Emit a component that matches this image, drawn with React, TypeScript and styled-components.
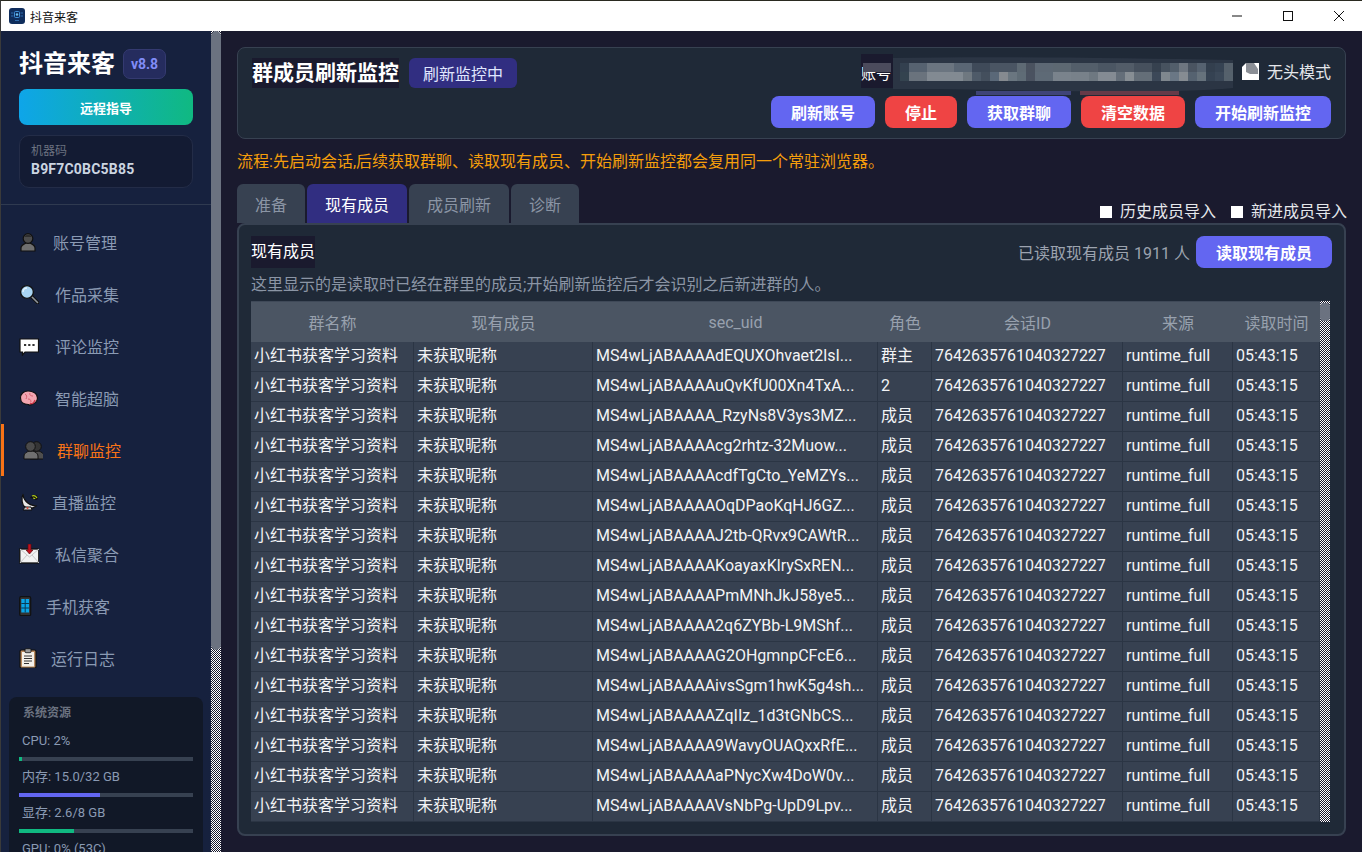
import React from "react";
import styled, { createGlobalStyle } from "styled-components";

const FONT = `Roboto, "Noto Sans CJK SC", sans-serif`;
const CHECKER = `conic-gradient(#ffffff 25%, #1a1a2e 0 50%, #ffffff 0 75%, #1a1a2e 0) 0 0 / 2px 2px`;

const Global = createGlobalStyle`
  html, body { margin: 0; padding: 0; background: #1a1a2e; overflow: hidden; }
  * { box-sizing: border-box; }
`;

const Win = styled.div`
  width: 1362px; height: 852px; display: flex; flex-direction: column; overflow: hidden;
  font-family: ${FONT}; font-size: 16px; background: #1a1a2e; color: #e5e7eb;
  border-left: 1px solid #3a3a3a; border-top: 1px solid #2a2a20;
`;
const TitleBar = styled.header`
  height: 30px; flex: none; background: #fff; color: #111; display: flex; align-items: center;
  padding-left: 8px; font-size: 12px; gap: 5px;
`;
const TitleText = styled.span`flex: 1;`;
const WinBtn = styled.div`
  width: 46px; height: 30px; display: flex; align-items: center; justify-content: center; color: #111;
`;
const Body = styled.div`flex: 1; display: flex; min-height: 0;`;
const Side = styled.aside`
  width: 210px; flex: none; background: #16213e; display: flex; flex-direction: column; overflow: hidden;
`;
const SideScroll = styled.div`
  width: 10px; flex: none; display: flex; flex-direction: column; background: ${CHECKER};
`;
const SideThumb = styled.div`
  height: 619px; background: #6b7280; border-radius: 5px 5px 5px 5px;
`;
const Brand = styled.div`
  padding: 18px 18px 0; display: flex; flex-direction: column;
`;
const BrandRow = styled.div`display: flex; align-items: center; gap: 8px; height: 30px;`;
const BrandName = styled.div`font-size: 24px; font-weight: 700; color: #fff; line-height: 30px;`;
const Version = styled.div`
  width: 43px; height: 30px; border-radius: 7px; background: #252c5e; border: 1px solid #343a70;
  color: #818cf8; font-size: 14px; font-weight: 700; display: flex; align-items: center; justify-content: center;
`;
const Remote = styled.button`
  margin-top: 10px; height: 36px; border: 0; border-radius: 8px; width: 174px; color: #fff;
  background: linear-gradient(90deg, #0ea5e9, #10b981); font: 700 13px ${FONT};
`;
const Machine = styled.div`
  margin-top: 10px; width: 174px; height: 53px; border-radius: 10px; background: #131b33;
  border: 1px solid #232c47; padding: 7px 11px; display: flex; flex-direction: column;
`;
const MachineLabel = styled.div`font-size: 12px; line-height: 16px; color: #6b7280;`;
const MachineCode = styled.div`font-size: 14px; font-weight: 700; line-height: 20px; color: #cbd5e1; letter-spacing: 0.2px;`;
const Rule = styled.div`height: 1px; margin-top: 16px; background: #2f3a50; flex: none;`;
const Nav = styled.nav`display: flex; flex-direction: column; padding-top: 11px; flex: none;`;
const NavItem = styled.div<{ $active?: boolean; $gap: number }>`
  height: 52px; display: flex; align-items: center; gap: ${(p) => p.$gap}px;
  padding-left: ${(p) => (p.$active ? 19 : 18)}px;
  border-left: ${(p) => (p.$active ? "3px solid #f97316" : "0")};
  color: ${(p) => (p.$active ? "#f97316" : "#8a9ab3")};
  font-size: 16px;
`;
const NavIcon = styled.svg`width: 20px; height: 20px; flex: none;`;
const Res = styled.section`
  margin: 13px 0 0 8px; width: 194px; flex: none; background: #111827; border-radius: 8px 8px 0 0;
  padding: 8px 10px 0; height: 180px;
`;
const ResTitle = styled.div`font-size: 12px; font-weight: 700; line-height: 16px; color: #6b7280; padding-left: 4px;`;
const ResLabel = styled.div`font-size: 13px; line-height: 20px; color: #8a9ab3; padding-left: 3px; margin-top: 6px;`;
const FirstLabel = styled(ResLabel)`margin-top: 10px;`;
const Track = styled.div`height: 4px; background: #374151; margin-top: 6px;`;
const Fill = styled.div<{ $color: string }>`height: 100%; background: ${(p) => p.$color};`;

const Main = styled.main`
  flex: 1; min-width: 0; padding: 16px 16px 0 16px; display: flex; flex-direction: column;
`;
const Head = styled.section`
  height: 92px; flex: none; background: #1f2937; border: 1px solid #374151; border-radius: 8px;
  display: flex; justify-content: space-between; padding: 6px 14px 0 14px;
`;
const HeadLeft = styled.div`display: flex; gap: 10px; margin-top: 4px; height: 30px;`;
const PageTitle = styled.h1`
  margin: 0; font-size: 21px; font-weight: 700; color: #fff; background: #1a1a2e; line-height: 30px; height: 30px;
`;
const Status = styled.div`
  width: 108px; height: 30px; border-radius: 6px; background: #312e81; color: #e0e7ff;
  font-size: 16px; display: flex; align-items: center; justify-content: center;
`;
const HeadRight = styled.div`display: flex; flex-direction: column; align-items: flex-end; gap: 8px;`;
const AccountRow = styled.div`height: 34px; display: flex; align-items: center;`;
const AccountLabel = styled.div`
  width: 32px; height: 34px; background: #1a1a2e; color: #fff; font-size: 15px; line-height: 40px; overflow: hidden;
`;
const Mosaic = styled.svg`
  width: 386px; height: 42px; margin-left: -37px; overflow: visible; flex: none; margin-top: 8px;
`;
const Headless = styled.svg`width: 17px; height: 17px; margin-right: 8px; flex: none;`;
const HeadlessText = styled.span`color: #e5e7eb; font-size: 16px;`;
const Buttons = styled.div`display: flex; gap: 10px;`;
const Btn = styled.button<{ $tone: "primary" | "danger" }>`
  height: 32px; padding: 0 20px; border: 0; border-radius: 8px; color: #fff; white-space: nowrap;
  background: ${(p) => (p.$tone === "primary" ? "#6366f1" : "#ef4444")};
  font: 700 16px ${FONT};
`;
const Flow = styled.p`
  margin: 12px 0 0; font-size: 16px; line-height: 22px; color: #f59e0b; height: 22px; flex: none;
`;
const TabRow = styled.div`
  margin-top: 11px; height: 39px; flex: none; display: flex; align-items: stretch; gap: 2px; position: relative; z-index: 1;
`;
const Tab = styled.div<{ $active?: boolean }>`
  padding: 0 18px; border-radius: 6px 6px 0 0; display: flex; align-items: center; font-size: 16px;
  background: ${(p) => (p.$active ? "#312e81" : "#374151")};
  color: ${(p) => (p.$active ? "#fff" : "#8b95a5")};
`;
const Checks = styled.div`
  margin-left: auto; display: flex; align-items: center; gap: 15px; padding: 17px 0 0 0; margin-right: -1px;
`;
const Check = styled.label`display: flex; align-items: center; gap: 8px; color: #e5e7eb; font-size: 16px; line-height: 22px;`;
const Box = styled.span`width: 12px; height: 12px; background: #fff; display: block;`;

const Panel = styled.section`
  height: 613px; flex: none; background: #1f2937; border: 2px solid #374151; border-radius: 8px;
  padding: 11px 12px 12px; display: flex; flex-direction: column;
`;
const PanelTop = styled.div`display: flex; align-items: center; height: 32px; flex: none;`;
const PanelTitle = styled.h2`
  margin: 0; font-size: 16px; font-weight: 400; color: #fff; background: #1a1a2e; line-height: 32px; height: 32px;
`;
const Count = styled.span`margin-left: auto; margin-right: 6px; color: #9ca3af;`;
const ReadBtn = styled(Btn)`width: 136px; padding: 0;`;
const Hint = styled.p`margin: 6px 0 0; line-height: 22px; height: 22px; color: #8b95a5; font-size: 16px; flex: none;`;
const TableWrap = styled.div`
  margin-top: 5px; height: 521px; flex: none; display: flex; overflow: hidden; width: 1079px;
`;
const Table = styled.div`width: 1069px; flex: none; display: flex; flex-direction: column; overflow: hidden;`;
const COLS = "163px 179px 285px 54px 191px 110px 87px";
const HeadRow = styled.div`
  display: grid; grid-template-columns: ${COLS}; height: 41px; flex: none; background: #4b5563;
  border-top: 1px solid #3f4958; color: #98a1ae;
`;
const HeadCell = styled.div`display: flex; align-items: center; justify-content: center; white-space: nowrap;`;
const Row = styled.div`
  display: grid; grid-template-columns: ${COLS}; height: 30px; flex: none; background: #374151;
`;
const Cell = styled.div`
  padding-left: 3px; line-height: 28px; color: #f3f4f6; white-space: nowrap; overflow: hidden;
  border-right: 1px solid #2b3544; border-bottom: 1px solid #2b3544;
`;
const TableScroll = styled.div`
  width: 10px; flex: none; background: ${CHECKER}; padding-top: 2px;
`;
const TableThumb = styled.div`height: 18px; background: #6b7280; border-radius: 4px;`;

const S = "#111";
const Person: React.FC<{ x?: number }> = ({ x = 0 }) => (
  <g transform={`translate(${x} 0)`}>
    <path d="M2 19v-3c0-3 3-4 5-5h4c2 1 5 2 5 5v3z" fill="#6f6f6f" stroke={S} strokeWidth="1.2" />
    <circle cx="9" cy="6.5" r="4.8" fill="#4c4c4c" stroke={S} strokeWidth="1.2" />
    <path d="M5 5c2-3 6-3 8 0" fill="#2d2d2d" />
  </g>
);
const ICONS: Record<string, React.ReactNode> = {
  account: <Person />,
  search: (
    <>
      <path d="M12 12l7 7" stroke={S} strokeWidth="3.4" strokeLinecap="round" />
      <path d="M12.5 12.5l6 6" stroke="#8f959c" strokeWidth="1.6" strokeLinecap="round" />
      <circle cx="8" cy="8" r="6.4" fill="#a8d4f2" stroke={S} strokeWidth="1.4" />
      <path d="M4 8a4 4 0 0 1 4-4" stroke="#e6f4fd" strokeWidth="1.4" fill="none" />
    </>
  ),
  chat: (
    <>
      <path d="M1 3h18.500v13H6l-2.500 3v-3H1z" fill="#fff" stroke={S} strokeWidth="1.2" />
      <path d="M5 9h2.200M9.200 9h2.200M13.400 9h2.200" stroke="#333" strokeWidth="2" />
    </>
  ),
  brain: (
    <>
      <path d="M1.500 10c0-4 3-7 7.500-7 5 0 9.500 2.500 9.500 7 0 3-2.500 6-5.500 6-1 1-2.500 1.500-3.500.5-4 0-8-2-8-6.500z" fill="#f4a6b0" stroke={S} strokeWidth="1.2" />
      <path d="M6 6c2 1 2 3 1 5M11 5c-1 2 1 3 3 3M9 11c2 0 3 1 3 3" stroke="#d9616f" strokeWidth="1" fill="none" />
      <path d="M11 15c1 1 3 1 4-1l1-2" stroke="#d33a4c" strokeWidth="1.400" fill="none" />
    </>
  ),
  group: (
    <>
      <g transform="translate(5 0)">
        <path d="M2 19v-3c0-3 3-4 5-5h4c2 1 5 2 5 5v3z" fill="#4e4e4e" stroke={S} strokeWidth="1" />
        <circle cx="8.500" cy="6.500" r="4.800" fill="#353535" stroke={S} strokeWidth="1" />
      </g>
      <g transform="translate(-1 0)">
        <path d="M2 19v-3c0-3 3-4 5-5h4c2 1 5 2 5 5v3z" fill="#707070" stroke={S} strokeWidth="1" />
        <circle cx="8.500" cy="6.500" r="4.800" fill="#4a4a4a" stroke={S} strokeWidth="1" />
      </g>
    </>
  ),
  dish: (
    <>
      <path d="M4 2c0 5 4 11 13 12-3 3-8 3-11 1S2 6 4 2z" fill="#e8e8e8" stroke={S} strokeWidth="1.200" />
      <path d="M4 18h9l-1-3H6z" fill="#cfcfcf" stroke={S} strokeWidth="1" />
      <circle cx="8.500" cy="16" r="1" fill="#d8402f" />
      <path d="M11 6c1-2 3-3 6-3 1 0 2 2 2 4l-2 1c-2-1-3-2-6-2z" fill="#111" />
      <path d="M13 4c2-1 4 0 5 2M14 6c1 0 2 0 2 1" stroke="#b5d019" strokeWidth="1.200" fill="none" />
    </>
  ),
  mail: (
    <>
      <rect x="0.800" y="5" width="19" height="14" fill="#f2f2f2" stroke={S} strokeWidth="1.300" />
      <path d="M1 5l9.500 8L20 5M1 19l7-8M20 19l-7-8" stroke="#c8c8c8" strokeWidth="1" fill="none" />
      <path d="M9 0h3v6h2l-3.500 4L7 6h2z" fill="#c2121f" stroke="#5a0b10" strokeWidth="0.700" />
    </>
  ),
  phone: (
    <>
      <rect x="0.700" y="0.700" width="11" height="19" rx="1.500" fill="#333" stroke={S} strokeWidth="1.200" />
      <rect x="2.300" y="3" width="7.800" height="13.500" fill="#0aa5e8" />
      <path d="M2.300 7.500h7.800M2.300 12h7.800M6.200 3v13.500" stroke="#0a3a55" strokeWidth="1" />
    </>
  ),
  clip: (
    <>
      <rect x="1" y="2" width="16" height="18" rx="1.500" fill="#b98a5e" stroke={S} strokeWidth="1.200" />
      <rect x="3" y="4" width="12" height="14.500" fill="#f4f1ea" />
      <rect x="6" y="0.700" width="6" height="4" rx="1" fill="#9a9a9a" stroke={S} strokeWidth="0.800" />
      <path d="M5 8h8M5 10.500h8M5 13h8M5 15.500h5" stroke="#333" strokeWidth="1.100" />
    </>
  ),
};
const NAV = [
  { key: "account", label: "账号管理", gap: 14 },
  { key: "search", label: "作品采集", gap: 16 },
  { key: "chat", label: "评论监控", gap: 16 },
  { key: "brain", label: "智能超脑", gap: 16 },
  { key: "group", label: "群聊监控", gap: 14, active: true },
  { key: "dish", label: "直播监控", gap: 13 },
  { key: "mail", label: "私信聚合", gap: 16 },
  { key: "phone", label: "手机获客", gap: 7 },
  { key: "clip", label: "运行日志", gap: 12 },
];
const RES = [
  { label: "内存: 15.0/32 GB", pct: 46.5, color: "#6366f1" },
  { label: "显存: 2.6/8 GB", pct: 31.6, color: "#10b981" },
];

const TOP: [number, number, string][] = [
  [862, 28, "#4b4b5c"], [899, 9, "#33404f"], [908, 18, "#566270"], [926, 27, "#6b7580"], [953, 18, "#5a6674"],
  [971, 18, "#3f4a59"], [989, 27, "#4a5563"], [1016, 9, "#5e6a74"], [1025, 9, "#4a525f"], [1034, 18, "#5d6874"],
  [1052, 18, "#5d6872"], [1070, 27, "#535e6a"], [1097, 18, "#4b5663"], [1115, 18, "#525c68"], [1133, 18, "#46505d"],
  [1151, 9, "#36414f"], [1160, 9, "#47525f"], [1169, 9, "#525e6b"], [1178, 9, "#6e7680"], [1187, 9, "#4a5461"],
  [1196, 9, "#566270"], [1205, 9, "#333f4e"], [1214, 9, "#364353"], [1223, 9, "#55606b"],
];
const BOTTOM: [number, number, string][] = [
  [899, 9, "#34434f"], [908, 18, "#6a737d"], [926, 36, "#828a92"], [962, 9, "#6f7880"], [971, 9, "#4e5a68"],
  [980, 9, "#444f5d"], [989, 9, "#5a6878"], [998, 9, "#858a90"], [1007, 9, "#6a7680"], [1016, 9, "#5f6c76"],
  [1025, 9, "#4a5260"], [1034, 18, "#5e6a76"], [1052, 18, "#7a838c"], [1070, 18, "#78818a"], [1088, 9, "#6e7881"],
  [1097, 18, "#848b93"], [1115, 9, "#646e79"], [1124, 9, "#878e94"], [1133, 18, "#646e78"], [1151, 9, "#3c4858"],
  [1160, 9, "#7f878e"], [1169, 9, "#6a7785"], [1178, 9, "#868c92"], [1187, 9, "#556270"], [1196, 9, "#66727c"],
  [1205, 9, "#354252"], [1214, 9, "#3b4858"], [1223, 9, "#55616c"],
];

const UIDS = [
  "MS4wLjABAAAAdEQUXOhvaet2lsI...", "MS4wLjABAAAAuQvKfU00Xn4TxA...", "MS4wLjABAAAA_RzyNs8V3ys3MZ...",
  "MS4wLjABAAAAcg2rhtz-32Muow...", "MS4wLjABAAAAcdfTgCto_YeMZYs...", "MS4wLjABAAAAOqDPaoKqHJ6GZ...",
  "MS4wLjABAAAAJ2tb-QRvx9CAWtR...", "MS4wLjABAAAAKoayaxKlrySxREN...", "MS4wLjABAAAAPmMNhJkJ58ye5...",
  "MS4wLjABAAAA2q6ZYBb-L9MShf...", "MS4wLjABAAAAG2OHgmnpCFcE6...", "MS4wLjABAAAAivsSgm1hwK5g4sh...",
  "MS4wLjABAAAAZqIIz_1d3tGNbCS...", "MS4wLjABAAAA9WavyOUAQxxRfE...", "MS4wLjABAAAAaPNycXw4DoW0v...",
  "MS4wLjABAAAAVsNbPg-UpD9Lpv...",
];
const HEADERS = ["群名称", "现有成员", "sec_uid", "角色", "会话ID", "来源", "读取时间"];

export default function App() {
  return (
    <Win>
      <Global />
      <TitleBar>
        <svg width="16" height="16" viewBox="0 0 16 16">
          <rect width="16" height="16" rx="3" fill="#0f2d5c" />
          <rect x="5.500" y="3.500" width="5" height="6" rx="1" fill="none" stroke="#3f8fd8" />
          <circle cx="8" cy="6.500" r="1.200" fill="#6cc0f0" />
          <path d="M2 5h2.500M2 8h2.500M11.500 5H14M11.500 8H14M6 12.500h4" stroke="#2f6cae" />
        </svg>
        <TitleText>抖音来客</TitleText>
        <WinBtn>
          <svg width="10" height="10" viewBox="0 0 10 10"><path d="M0 5h10" stroke="#111" /></svg>
        </WinBtn>
        <WinBtn>
          <svg width="10" height="10" viewBox="0 0 10 10"><rect x=".5" y=".5" width="9" height="9" fill="none" stroke="#111" /></svg>
        </WinBtn>
        <WinBtn>
          <svg width="10" height="10" viewBox="0 0 10 10"><path d="M0 0l10 10M10 0L0 10" stroke="#111" /></svg>
        </WinBtn>
      </TitleBar>
      <Body>
        <Side>
          <Brand>
            <BrandRow>
              <BrandName>抖音来客</BrandName>
              <Version>v8.8</Version>
            </BrandRow>
            <Remote>远程指导</Remote>
            <Machine>
              <MachineLabel>机器码</MachineLabel>
              <MachineCode>B9F7C0BC5B85</MachineCode>
            </Machine>
          </Brand>
          <Rule />
          <Nav>
            {NAV.map((n) => (
              <NavItem key={n.key} $gap={n.gap} $active={n.active}>
                <NavIcon viewBox="0 0 20 20">{ICONS[n.key]}</NavIcon>
                {n.label}
              </NavItem>
            ))}
          </Nav>
          <Res>
            <ResTitle>系统资源</ResTitle>
            <FirstLabel>CPU: 2%</FirstLabel>
            <Track><Fill $color="#10b981" style={{ width: "2%" }} /></Track>
            {RES.map((r) => (
              <React.Fragment key={r.label}>
                <ResLabel>{r.label}</ResLabel>
                <Track><Fill $color={r.color} style={{ width: `${r.pct}%` }} /></Track>
              </React.Fragment>
            ))}
            <ResLabel>GPU: 0% (53C)</ResLabel>
          </Res>
        </Side>
        <SideScroll><SideThumb /></SideScroll>
        <Main>
          <Head>
            <HeadLeft>
              <PageTitle>群成员刷新监控</PageTitle>
              <Status>刷新监控中</Status>
            </HeadLeft>
            <HeadRight>
              <AccountRow>
                <AccountLabel>账号</AccountLabel>
                <Mosaic viewBox="855 54 386 42">
                  <path d="M892 58C1000 56 1120 58 1232 60v28c-40 4-110 4-170 3-60-1-120-2-170-2z" fill="#2b3544" />
                  <rect x="975" y="91" width="95" height="4" fill="#3f4478" />
                  <rect x="1079" y="91" width="99" height="4" fill="#663a48" />
                  {TOP.map(([x, w, c]) => <rect key={x} x={x} y="63" width={w} height="9" fill={c} />)}
                  {BOTTOM.map(([x, w, c]) => <rect key={x} x={x} y="72" width={w} height="9" fill={c} />)}
                </Mosaic>
                <Headless viewBox="0 0 17 17">
                  <path d="M4 0h13v17H0V4z" fill="#fff" />
                  <path d="M4 0h8l4 6v5H8L4 9z" fill="#8b8f96" />
                </Headless>
                <HeadlessText>无头模式</HeadlessText>
              </AccountRow>
              <Buttons>
                <Btn $tone="primary">刷新账号</Btn>
                <Btn $tone="danger">停止</Btn>
                <Btn $tone="primary">获取群聊</Btn>
                <Btn $tone="danger">清空数据</Btn>
                <Btn $tone="primary">开始刷新监控</Btn>
              </Buttons>
            </HeadRight>
          </Head>
          <Flow>流程:先启动会话,后续获取群聊、读取现有成员、开始刷新监控都会复用同一个常驻浏览器。</Flow>
          <TabRow>
            <Tab>准备</Tab>
            <Tab $active>现有成员</Tab>
            <Tab>成员刷新</Tab>
            <Tab>诊断</Tab>
            <Checks>
              <Check><Box />历史成员导入</Check>
              <Check><Box />新进成员导入</Check>
            </Checks>
          </TabRow>
          <Panel>
            <PanelTop>
              <PanelTitle>现有成员</PanelTitle>
              <Count>已读取现有成员 1911 人</Count>
              <ReadBtn $tone="primary">读取现有成员</ReadBtn>
            </PanelTop>
            <Hint>这里显示的是读取时已经在群里的成员;开始刷新监控后才会识别之后新进群的人。</Hint>
            <TableWrap>
              <Table>
                <HeadRow>
                  {HEADERS.map((h) => <HeadCell key={h}>{h}</HeadCell>)}
                </HeadRow>
                {UIDS.map((uid, i) => (
                  <Row key={uid}>
                    <Cell>小红书获客学习资料</Cell>
                    <Cell>未获取昵称</Cell>
                    <Cell>{uid}</Cell>
                    <Cell>{i === 0 ? "群主" : i === 1 ? "2" : "成员"}</Cell>
                    <Cell>7642635761040327227</Cell>
                    <Cell>runtime_full</Cell>
                    <Cell>05:43:15</Cell>
                  </Row>
                ))}
              </Table>
              <TableScroll><TableThumb /></TableScroll>
            </TableWrap>
          </Panel>
        </Main>
      </Body>
    </Win>
  );
}
